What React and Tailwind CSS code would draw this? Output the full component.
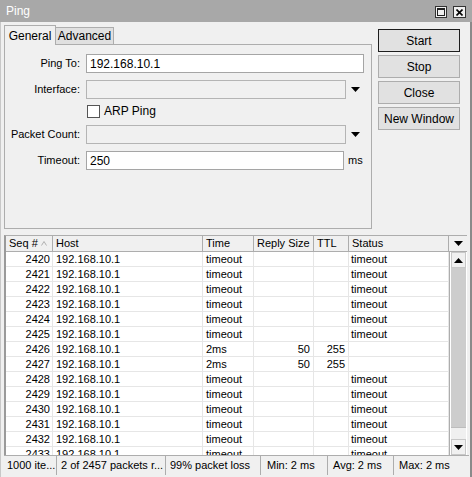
import React from "react";

const rows = [
  [2420, "timeout", "", "", "timeout"],
  [2421, "timeout", "", "", "timeout"],
  [2422, "timeout", "", "", "timeout"],
  [2423, "timeout", "", "", "timeout"],
  [2424, "timeout", "", "", "timeout"],
  [2425, "timeout", "", "", "timeout"],
  [2426, "2ms", "50", "255", ""],
  [2427, "2ms", "50", "255", ""],
  [2428, "timeout", "", "", "timeout"],
  [2429, "timeout", "", "", "timeout"],
  [2430, "timeout", "", "", "timeout"],
  [2431, "timeout", "", "", "timeout"],
  [2432, "timeout", "", "", "timeout"],
  [2433, "timeout", "", "", "timeout"],
];

function Arrow({ up = false, className = "" }) {
  return (
    <svg width="9" height="5" viewBox="0 0 9 5" className={className}>
      {up ? <path d="M0 5 L4.5 0 L9 5 Z" fill="#000" /> : <path d="M0 0 L9 0 L4.5 5 Z" fill="#000" />}
    </svg>
  );
}

function Field({ label, children, className = "" }) {
  return (
    <div className={`flex items-center h-[19px] ${className}`}>
      <div className="w-[76px] text-right pr-[1px]">{label}</div>
      <div className="ml-[5px] flex items-center">{children}</div>
    </div>
  );
}

function Btn({ children, primary }) {
  return (
    <button
      className={`h-[23px] w-[82px] bg-[#e1e1e1] text-[12px] ${
        primary ? "border border-[#1e1e1e]" : "border border-[#adadad]"
      }`}
    >
      {children}
    </button>
  );
}

export default function App() {
  return (
    <div className="w-[472px] h-[477px] bg-[#f0f0f0] overflow-hidden flex flex-col text-[11px] text-black font-['Liberation_Sans',Arial,sans-serif]">
      {/* Title bar */}
      <div className="h-[22px] bg-[#a8a8a8] flex items-center justify-between pl-[6px] pr-[6px] shrink-0">
        <span className="text-white text-[12px]">Ping</span>
        <div className="flex items-center gap-[6px] mt-[2px]">
          <div className="w-[12px] h-[12px] bg-[#f0f0f0] border border-[#333] flex items-center justify-center">
            <div className="w-[8px] h-[8px] border border-[#222] border-t-2"></div>
          </div>
          <div className="w-[13px] h-[12px] bg-[#f0f0f0] border border-[#333] flex items-center justify-center">
            <svg width="7" height="7" viewBox="0 0 7 7">
              <path d="M0.5 0.5 L6.5 6.5 M6.5 0.5 L0.5 6.5" stroke="#000" strokeWidth="1.6" />
            </svg>
          </div>
        </div>
      </div>

      {/* Body */}
      <div className="flex-1 flex flex-col border-l border-l-[#c8c8c8] border-r-2 border-r-[#8a8a8a] pl-[3px] pr-[1px] min-h-0">
        <div className="flex shrink-0">
          {/* Tabs and panel */}
          <div className="w-[368px] flex flex-col">
            <div className="flex items-end h-[22px] pt-[3px]">
              <div className="relative z-10 -mb-px h-[20px] w-[52px] border border-b-0 border-[#adadad] bg-[#f0f0f0] flex items-center justify-center text-[12px]">
                General
              </div>
              <div className="h-[17px] w-[58px] border border-l-0 border-b-0 border-[#adadad] bg-[#e0e0e0] flex items-center justify-center text-[12px]">
                Advanced
              </div>
            </div>
            <div className="h-[185px] border border-[#adadad] pt-[9px]">
              <Field label="Ping To:">
                <div className="w-[278px] h-[19px] bg-white border border-[#a5a5a5] px-[3px] flex items-center text-[12px]">
                  192.168.10.1
                </div>
              </Field>
              <Field label="Interface:" className="mt-[7px]">
                <div className="w-[260px] h-[19px] bg-[#f0f0f0] border border-[#b4b4b4]"></div>
                <Arrow className="ml-[5px]" />
              </Field>
              <div className="flex items-center h-[14px] mt-[5px] pl-[82px]">
                <div className="w-[13px] h-[13px] bg-white border border-[#555]"></div>
                <span className="ml-[4px] text-[12px]">ARP Ping</span>
              </div>
              <Field label="Packet Count:" className="mt-[7px]">
                <div className="w-[260px] h-[19px] bg-[#f0f0f0] border border-[#b4b4b4]"></div>
                <Arrow className="ml-[5px]" />
              </Field>
              <Field label="Timeout:" className="mt-[7px]">
                <div className="w-[258px] h-[19px] bg-white border border-[#a5a5a5] px-[3px] flex items-center text-[12px]">
                  250
                </div>
                <span className="ml-[4px]">ms</span>
              </Field>
            </div>
          </div>
          {/* Buttons */}
          <div className="ml-[6px] pt-[7px] flex flex-col gap-[3px]">
            <Btn primary>Start</Btn>
            <Btn>Stop</Btn>
            <Btn>Close</Btn>
            <Btn>New Window</Btn>
          </div>
        </div>

        {/* Table */}
        <div className="mt-[6px] w-[463px] flex-1 min-h-0 flex flex-col border-l-2 border-l-[#9a9a9a] border-t border-t-[#adadad] overflow-hidden">
          <div className="flex h-[16px] shrink-0 bg-[#f0f0f0] border-b border-[#adadad]">
            <div className="w-[47px] border-r border-[#adadad] pl-[3px] flex items-center">
              Seq #
              <svg width="6" height="5" viewBox="0 0 6 5" className="ml-[3px]">
                <path d="M0.5 4.5 L3 0.5 L5.5 4.5" fill="none" stroke="#b0b0b0" />
              </svg>
            </div>
            <div className="w-[150px] border-r border-[#adadad] pl-[3px] flex items-center">Host</div>
            <div className="w-[51px] border-r border-[#adadad] pl-[3px] flex items-center">Time</div>
            <div className="w-[60px] border-r border-[#adadad] pl-[3px] flex items-center">Reply Size</div>
            <div className="w-[35px] border-r border-[#adadad] pl-[3px] flex items-center">TTL</div>
            <div className="w-[100px] border-r border-[#adadad] pl-[3px] flex items-center">Status</div>
            <div className="w-[18px] flex items-center justify-center">
              <Arrow />
            </div>
          </div>
          <div className="flex flex-1 min-h-0">
            <div className="w-[444px] bg-white overflow-hidden">
              {rows.map((r) => (
                <div key={r[0]} className="flex h-[15px] border-b border-[#e6e6e6] leading-[14px]">
                  <div className="w-[47px] border-r border-[#e6e6e6] text-right pr-[2px]">{r[0]}</div>
                  <div className="w-[150px] border-r border-[#e6e6e6] pl-[3px]">192.168.10.1</div>
                  <div className="w-[51px] border-r border-[#e6e6e6] pl-[3px]">{r[1]}</div>
                  <div className="w-[60px] border-r border-[#e6e6e6] text-right pr-[3px]">{r[2]}</div>
                  <div className="w-[35px] border-r border-[#e6e6e6] text-right pr-[3px]">{r[3]}</div>
                  <div className="w-[100px] border-r border-[#e6e6e6] pl-[2px]">{r[4]}</div>
                </div>
              ))}
            </div>
            <div className="w-[18px] bg-white flex flex-col border-l border-[#adadad] pl-[1px] pr-[1px]">
              <div className="h-[16px] bg-[#f0f0f0] border border-[#c8c8c8] flex items-center justify-center">
                <Arrow up />
              </div>
              <div className="flex-1 bg-[#cdcdcd] flex flex-col justify-end">
                <div className="h-[12px] bg-[#f0f0f0] border-t border-[#bdbdbd]"></div>
              </div>
              <div className="h-[16px] bg-[#f0f0f0] border border-[#c8c8c8] flex items-center justify-center">
                <Arrow />
              </div>
            </div>
          </div>
        </div>

        {/* Status bar */}
        <div className="h-[22px] shrink-0 flex border-t border-[#adadad] pb-[2px]">
          <div className="w-[53px] border-r border-[#adadad] pl-[3px] flex items-center whitespace-nowrap overflow-hidden">1000 ite...</div>
          <div className="w-[109px] border-r border-[#adadad] pl-[4px] flex items-center whitespace-nowrap overflow-hidden">2 of 2457 packets r...</div>
          <div className="w-[95px] border-r border-[#adadad] pl-[4px] flex items-center whitespace-nowrap overflow-hidden">99% packet loss</div>
          <div className="w-[67px] border-r border-[#adadad] pl-[6px] flex items-center whitespace-nowrap">Min: 2 ms</div>
          <div className="w-[66px] border-r border-[#adadad] pl-[5px] flex items-center whitespace-nowrap">Avg: 2 ms</div>
          <div className="flex-1 pl-[5px] flex items-center whitespace-nowrap">Max: 2 ms</div>
        </div>
      </div>
    </div>
  );
}
